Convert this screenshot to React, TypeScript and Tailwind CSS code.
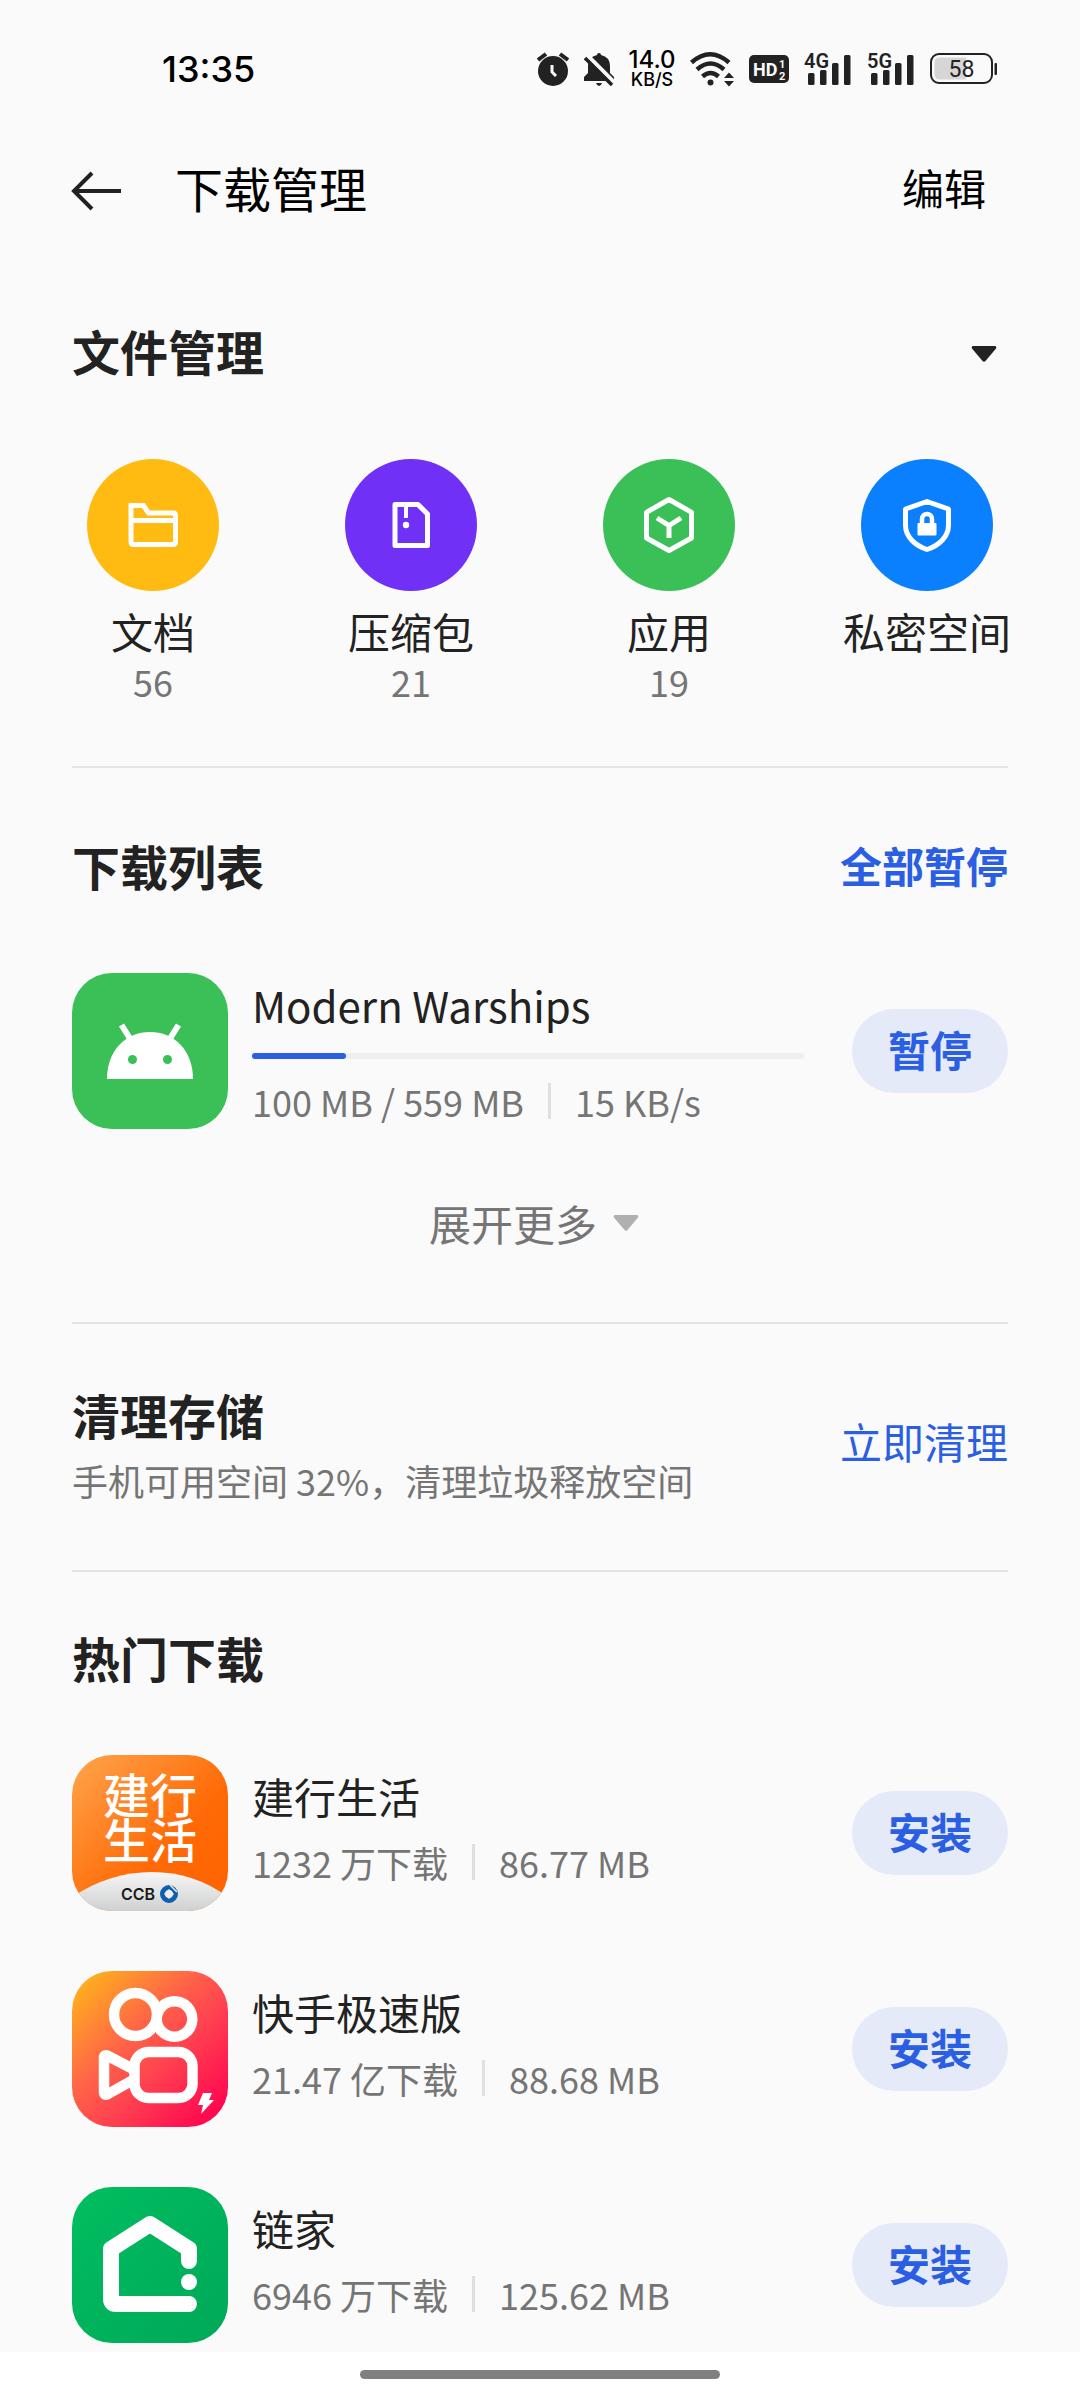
import type { ReactNode } from "react";

const categories = [
  { name: "文档", count: 56, color: "bg-[#ffbb11]", icon: <FolderIcon /> },
  { name: "压缩包", count: 21, color: "bg-[#7030f5]", icon: <ArchiveIcon /> },
  { name: "应用", count: 19, color: "bg-[#3bbf57]", icon: <CubeIcon /> },
  { name: "私密空间", count: null, color: "bg-[#0a80ff]", icon: <ShieldIcon /> },
];

const hotApps = [
  { name: "建行生活", downloads: "1232 万下载", size: "86.77 MB", logo: <CcbLogo /> },
  { name: "快手极速版", downloads: "21.47 亿下载", size: "88.68 MB", logo: <KuaishouLogo /> },
  { name: "链家", downloads: "6946 万下载", size: "125.62 MB", logo: <LianjiaLogo /> },
];

function FolderIcon() {
  return (
    <svg viewBox="0 0 132 132" className="size-full" fill="none" stroke="#fff" strokeWidth="5" aria-hidden="true">
      <path d="M44 46.5H56.5L61.5 54H86Q88.5 54 88.5 56.5V83Q88.5 85.5 86 85.5H46.5Q44 85.5 44 83Z" />
      <path d="M44 61.5H88" />
    </svg>
  );
}

function ArchiveIcon() {
  return (
    <svg viewBox="0 0 132 132" className="size-full" fill="none" stroke="#fff" strokeWidth="5" aria-hidden="true">
      <path d="M50 45.5H73L82.5 55V86.5H50Z" strokeLinejoin="round" />
      <path d="M61 45V59" strokeWidth="4" />
      <circle cx="61" cy="66" r="3.2" fill="#fff" stroke="none" />
    </svg>
  );
}

function CubeIcon() {
  return (
    <svg viewBox="0 0 132 132" className="size-full" fill="none" stroke="#fff" strokeWidth="5" aria-hidden="true">
      <path d="M66 40.5L88.5 53.3V79L66 91.5L43.5 79V53.3Z" strokeLinejoin="round" />
      <path d="M54 59L66 66.5L78 59M66 66V79" />
    </svg>
  );
}

function ShieldIcon() {
  return (
    <svg viewBox="0 0 132 132" className="size-full" fill="none" stroke="#fff" strokeWidth="5" aria-hidden="true">
      <path d="M66 42.5L87.5 50V66C87.5 78 78 86.5 66 90.5C54 86.5 44.5 78 44.5 66V50Z" strokeLinejoin="round" />
      <rect x="56.5" y="64" width="19" height="12.5" rx="1" fill="#fff" stroke="none" />
      <path d="M61 65V60a5 5 0 0 1 10 0V65" strokeWidth="4.5" />
    </svg>
  );
}

function AndroidLogo() {
  return (
    <svg viewBox="0 0 156 156" className="size-full bg-[#3bbf57]" aria-hidden="true">
      <path d="M35 106C35 77 54 59 78 59S121 77 121 106Z" fill="#fff" />
      <path d="M49.5 52L59.5 68M106.5 52L96.5 68" stroke="#fff" strokeWidth="6" />
      <circle cx="60.5" cy="86.5" r="4.5" fill="#3bbf57" />
      <circle cx="95.5" cy="86.5" r="4.5" fill="#3bbf57" />
    </svg>
  );
}

function CcbLogo() {
  return (
    <svg viewBox="0 0 156 156" className="size-full" aria-hidden="true">
      <defs>
        <linearGradient id="ccb-bg" x1="0" y1="0" x2="1" y2="1">
          <stop offset="0" stopColor="#ffa54c" />
          <stop offset="0.6" stopColor="#ff6a06" />
          <stop offset="1" stopColor="#ff6200" />
        </linearGradient>
        <linearGradient id="ccb-hill" x1="0" y1="0" x2="0" y2="1">
          <stop offset="0" stopColor="#f6f6f6" />
          <stop offset="1" stopColor="#cfd0d1" />
        </linearGradient>
      </defs>
      <rect width="156" height="156" fill="url(#ccb-bg)" />
      <path d="M0 142Q38 117 80 117T156 142V156H0Z" fill="url(#ccb-hill)" />
      <g fill="#fff" fontSize="47" fontWeight="500" textAnchor="middle">
        <text x="78" y="58">建行</text>
        <text x="78" y="103">生活</text>
      </g>
      <text x="49" y="145" fontSize="16" fontWeight="600" fill="#1a1a1a" fontFamily="Inter, sans-serif">CCB</text>
      <circle cx="97" cy="139" r="6.5" fill="none" stroke="#0f5fae" strokeWidth="5" />
      <path d="M97 134L102 139L97 144L92 139Z" fill="#eee" />
      <path d="M98 130L105 137" stroke="#eee" strokeWidth="1.5" />
    </svg>
  );
}

function KuaishouLogo() {
  return (
    <svg viewBox="0 0 156 156" className="size-full" fill="none" stroke="#fff" strokeWidth="10.5" aria-hidden="true">
      <defs>
        <linearGradient id="ks-bg" x1="0" y1="0" x2="1" y2="1">
          <stop offset="0.05" stopColor="#ffb31c" />
          <stop offset="0.4" stopColor="#ff6348" />
          <stop offset="0.6" stopColor="#ff4150" />
          <stop offset="0.9" stopColor="#ff0a4f" />
        </linearGradient>
      </defs>
      <rect width="156" height="156" fill="url(#ks-bg)" stroke="none" />
      <circle cx="63.5" cy="43.5" r="21.5" />
      <circle cx="102.5" cy="48" r="17.8" />
      <rect x="62.5" y="81" width="58" height="46" rx="14" />
      <path d="M61 98L36 85Q32 83 32 87V121Q32 125 36 123L61 109" strokeLinejoin="round" />
      <path d="M131 122H140L137 129H142L129 143L131 134H126Z" fill="#fff" stroke="none" />
    </svg>
  );
}

function LianjiaLogo() {
  return (
    <svg viewBox="0 0 156 156" className="size-full bg-linear-to-br from-[#00be60] to-[#00a858]" aria-hidden="true">
      <path
        d="M117 74V62L78 37L39 62V112Q39 117 44 117H117"
        fill="none"
        stroke="#fff"
        strokeWidth="16"
        strokeLinecap="round"
        strokeLinejoin="round"
      />
      <circle cx="117" cy="95" r="8" fill="#fff" />
    </svg>
  );
}

function Caret({ className }: { className: string }) {
  return (
    <svg viewBox="0 0 26 16" className={`h-4 w-[26px] ${className}`} fill="currentColor" aria-hidden="true">
      <path d="M2 0H24Q26 0.5 25 2.5L14.5 15Q13 16.5 11.5 15L1 2.5Q0 0.5 2 0Z" />
    </svg>
  );
}

function Signal({ network }: { network: string }) {
  return (
    <svg viewBox="0 0 48 44" className="h-11 w-12" fill="#222" role="img" aria-label={network}>
      <text x="0" y="21" fontSize="20" fontWeight="600" fontFamily="Roboto, sans-serif">{network}</text>
      <rect x="4" y="26" width="6.5" height="12" rx="1.5" />
      <rect x="16" y="23" width="6.5" height="15" rx="1.5" />
      <rect x="28" y="16" width="6.5" height="22" rx="1.5" />
      <rect x="40" y="8" width="6.5" height="30" rx="1.5" />
    </svg>
  );
}

function StatusBar() {
  return (
    <div className="flex h-[137px] items-center justify-between pr-[83px] pl-[162px] font-[Inter,sans-serif] text-black">
      <time className="text-4xl leading-10 font-medium">13:35</time>
      <div className="flex items-center gap-[15px]">
        {/* alarm */}
        <svg viewBox="0 0 32 36" className="h-9 w-8" fill="#222" aria-hidden="true">
          <circle cx="16" cy="20" r="15" />
          <path d="M1 9L9 3M31 9L23 3" stroke="#222" strokeWidth="4" />
          <path d="M15 14V21L19 25" fill="none" stroke="#fafafa" strokeWidth="3" />
        </svg>
        {/* muted bell */}
        <svg viewBox="0 0 30 36" className="h-9 w-[30px]" fill="#222" aria-hidden="true">
          <path d="M15 2Q17 2 17 4Q26 6 26 15V22L30 26V30H0V26L4 22V15Q4 6 13 4Q13 2 15 2Z" />
          <path d="M12 32H18Q17 35 15 35T12 32Z" />
          <path d="M4 5L31 32" stroke="#fafafa" strokeWidth="4" />
          <path d="M1 7L28 34" stroke="#222" strokeWidth="3.5" />
        </svg>
        <div className="flex w-[46px] flex-col items-center font-medium">
          <span className="text-2xl leading-[22px]">14.0</span>
          <span className="text-lg leading-[18px]">KB/S</span>
        </div>
        {/* wifi with traffic arrows */}
        <svg viewBox="0 0 44 36" className="h-9 w-11" fill="none" stroke="#222" strokeWidth="4.5" aria-hidden="true">
          <path d="M1.5 11.5Q20 -5 39 11.5M7 18.5Q20.5 6.5 34 18.5M12.5 25.5Q20.5 18.5 28.5 25.5" />
          <circle cx="20.5" cy="31.5" r="3" fill="#222" stroke="none" />
          <path d="M34 27L39 21.5L44 27ZM34 30L39 35.5L44 30Z" fill="#222" stroke="none" />
        </svg>
        <svg viewBox="0 0 40 28" className="h-7 w-10" fontFamily="Roboto, sans-serif" fontWeight="700" aria-hidden="true">
          <rect width="40" height="28" rx="5" fill="#222" />
          <text x="4" y="21" fontSize="18" fill="#fafafa">HD</text>
          <text x="30" y="13" fontSize="11" fill="#fafafa">1</text>
          <text x="30" y="25" fontSize="11" fill="#fafafa">2</text>
        </svg>
        <Signal network="4G" />
        <Signal network="5G" />
        <svg viewBox="0 0 67 32" className="h-8 w-[67px]" aria-hidden="true">
          <rect x="1" y="1" width="61" height="29" rx="8" fill="none" stroke="#222" strokeWidth="2" />
          <path d="M10 4.5H36V26.5H10Q4.5 26.5 4.5 21V10Q4.5 4.5 10 4.5Z" fill="#d6d6d6" />
          <rect x="64.5" y="10" width="2.5" height="12" rx="1" fill="#222" />
          <text x="31.5" y="23.5" fontSize="23" textAnchor="middle" fill="#222" fontFamily="Roboto, sans-serif">58</text>
        </svg>
      </div>
    </div>
  );
}

function SectionTitle({ children }: { children: ReactNode }) {
  return <h2 className="text-5xl leading-[72px] font-bold">{children}</h2>;
}

function AppRow({ logo, action, children }: { logo: ReactNode; action: string; children: ReactNode }) {
  return (
    <div className="flex items-center">
      <div className="size-[156px] shrink-0 overflow-hidden rounded-[40px]">{logo}</div>
      <div className="ml-6 min-w-0 flex-1">{children}</div>
      <button className="ml-12 h-[84px] w-[156px] shrink-0 rounded-full bg-[#e5eaf9] pb-1 text-[42px] leading-[56px] font-bold text-[#2b5fe3]">
        {action}
      </button>
    </div>
  );
}

function Meta({ left, right }: { left: string; right: string }) {
  return (
    <p className="flex items-center gap-6 text-4xl leading-[48px] text-[#757575]">
      <span>{left}</span>
      <span className="h-9 w-[3px] bg-[#e0e0e0]" />
      <span>{right}</span>
    </p>
  );
}

export default function App() {
  const progress = 17;

  return (
    <div className="flex min-h-screen flex-col bg-[#fafafa] font-['Noto_Sans_CJK_SC',sans-serif] text-[#222]">
      <StatusBar />

      <header className="flex h-[108px] items-center pr-[94px] pl-[71px] text-black">
        <button aria-label="返回">
          <svg viewBox="0 0 50 40" className="h-10 w-[50px]" fill="none" stroke="#222" strokeWidth="4" aria-hidden="true">
            <path d="M50 20H3M21 2L3 20L21 38" />
          </svg>
        </button>
        <h1 className="ml-[54px] pb-2 text-5xl leading-[72px]">下载管理</h1>
        <button className="ml-auto pb-2 text-[42px] leading-[56px]">编辑</button>
      </header>

      <main className="flex-1 px-[72px] pb-[9px]">
        <section className="border-b-2 border-[#e4e4e4] pt-[69px] pb-[63px]">
          <div className="flex items-center justify-between">
            <SectionTitle>文件管理</SectionTitle>
            <button aria-label="收起" className="pt-2 pr-[11px]">
              <Caret className="text-[#222]" />
            </button>
          </div>
          <div className="-mx-12 mt-[73px] grid grid-cols-4 items-start">
            {categories.map((item) => (
              <button key={item.name} className="flex flex-col items-center">
                <span className={`size-[132px] rounded-full ${item.color}`}>{item.icon}</span>
                <span className="mt-3 text-[42px] leading-[56px]">{item.name}</span>
                {item.count !== null && <span className="text-4xl leading-[44px] text-[#757575]">{item.count}</span>}
              </button>
            ))}
          </div>
        </section>

        <section className="border-b-2 border-[#e4e4e4] pt-[61px] pb-[71px]">
          <div className="mb-[72px] flex items-center justify-between">
            <SectionTitle>下载列表</SectionTitle>
            <button className="text-[42px] leading-[56px] font-bold text-[#2b5fe3]">全部暂停</button>
          </div>
          <AppRow logo={<AndroidLogo />} action="暂停">
            <h3 className="text-[42px] leading-[56px]">Modern Warships</h3>
            <div
              role="progressbar"
              aria-label="Modern Warships"
              aria-valuenow={progress}
              className="mt-5 mb-[18px] h-1.5 rounded-full bg-[#efefef]"
            >
              <div className="h-full rounded-full bg-[#2b5fe3]" style={{ width: `${progress}%` }} />
            </div>
            <Meta left="100 MB / 559 MB" right="15 KB/s" />
          </AppRow>
          <button className="mx-auto mt-[66px] flex items-center gap-4 pr-3 text-[42px] leading-[56px] text-[#757575]">
            展开更多
            <Caret className="text-[#b0b0b0]" />
          </button>
        </section>

        <section className="flex items-center justify-between border-b-2 border-[#e4e4e4] pt-[54px] pb-[66px]">
          <div>
            <SectionTitle>清理存储</SectionTitle>
            <p className="mt-1.5 text-4xl leading-[48px] text-[#757575]">手机可用空间 32%，清理垃圾释放空间</p>
          </div>
          <button className="text-[42px] leading-[56px] text-[#2b5fe3]">立即清理</button>
        </section>

        <section className="pt-[49px]">
          <SectionTitle>热门下载</SectionTitle>
          <ul className="mt-[62px] flex flex-col gap-[60px]">
            {hotApps.map((app) => (
              <li key={app.name}>
                <AppRow logo={app.logo} action="安装">
                  <h3 className="text-[42px] leading-[56px]">{app.name}</h3>
                  <div className="pt-3.5 pb-3">
                    <Meta left={app.downloads} right={app.size} />
                  </div>
                </AppRow>
              </li>
            ))}
          </ul>
        </section>
      </main>

      {/* gesture bar */}
      <footer className="flex h-12 justify-center bg-white pt-[18px]">
        <div className="h-[9px] w-1/3 rounded-full bg-[#808080]" />
      </footer>
    </div>
  );
}
